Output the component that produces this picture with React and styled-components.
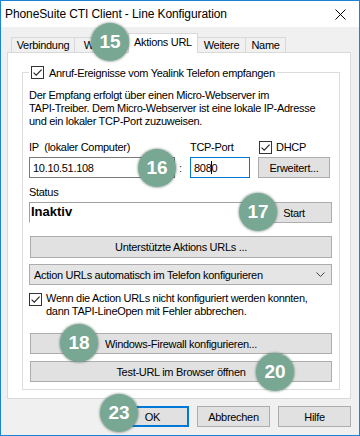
import React from 'react';
import styled, { createGlobalStyle, css } from 'styled-components';

const Global = createGlobalStyle`
  html, body { margin: 0; padding: 0; background: #fff; }
  body {
    font-family: "Liberation Sans", Arial, sans-serif;
    font-size: 11px;
    letter-spacing: -0.3px;
    color: #000;
  }
  * { box-sizing: border-box; }
`;

const Window = styled.div`
  position: relative;
  width: 360px;
  height: 436px;
  border: 1px solid #1883d7;
  background: #f0f0f0;
  display: flex;
  flex-direction: column;
  overflow: hidden;
`;

const TitleBar = styled.div`
  height: 26px;
  flex: 0 0 auto;
  background: #fff;
  display: flex;
  align-items: center;
  justify-content: space-between;
  padding-left: 4px;
`;

const Title = styled.span`
  font-size: 12px;
  letter-spacing: -0.1px;
  color: #000;
`;

const CloseButton = styled.div`
  width: 46px;
  height: 100%;
  display: flex;
  align-items: center;
  justify-content: center;
  margin-right: -4px;
  padding-top: 1px;
`;

const Body = styled.div`
  flex: 1 1 auto;
  display: flex;
  flex-direction: column;
  padding: 6px 8px 0 6px;
`;

const TabStrip = styled.div`
  display: flex;
  align-items: flex-end;
  height: 19px;
  padding-left: 4px;
  position: relative;
  z-index: 2;
`;

const Tab = styled.div`
  width: ${p => p.$w}px;
  height: 15px;
  margin-left: -1px;
  border: 1px solid #d9d9d9;
  border-bottom: none;
  background: #f0f0f0;
  display: flex;
  align-items: center;
  justify-content: center;
  white-space: nowrap;
  overflow: hidden;
  &:first-child { margin-left: 0; }
  ${p => p.$active && css`
    height: 20px;
    margin-bottom: -1px;
    background: #fff;
    padding-bottom: 3px;
    position: relative;
    z-index: 3;
  `}
`;

const Panel = styled.div`
  height: 347px;
  border: 1px solid #d9d9d9;
  background: #fff;
  padding: 0 10px 8px 14px;
  display: flex;
  flex-direction: column;
`;

const Group = styled.fieldset`
  margin: 13px 0 0 0;
  flex: 1 1 auto;
  border: 1px solid #dcdcdc;
  padding: 0 7px 0 6px;
  min-width: 0;
  display: flex;
  flex-direction: column;
`;

const Legend = styled.legend`
  padding: 0 2px;
  margin-left: 0;
  display: flex;
  align-items: center;
  gap: 5px;
  height: 13px;
  white-space: nowrap;
`;

const Box = styled.span`
  width: 13px;
  height: 13px;
  flex: 0 0 13px;
  border: 1px solid #333;
  background: #fff;
  display: inline-flex;
  align-items: center;
  justify-content: center;
`;

function CheckBox() {
  return (
    <Box>
      <svg width="11" height="11" viewBox="0 0 11 11">
        <path d="M1.6 5.6 L4.2 8.2 L9.6 2.6" fill="none" stroke="#222" strokeWidth="1.1" />
      </svg>
    </Box>
  );
}

const Description = styled.p`
  margin: 10px 0 0 0;
  line-height: 13px;
  white-space: nowrap;
`;

const AddressGrid = styled.div`
  display: grid;
  grid-template-columns: 146px 15px 60px 1fr;
  grid-template-rows: 13px 21px;
  row-gap: 3px;
  margin-top: 13px;
  align-items: center;
`;

const FieldLabel = styled.span`
  white-space: nowrap;
  line-height: 13px;
`;

const CheckLine = styled.label`
  display: flex;
  align-items: center;
  gap: 4px;
  padding-left: 9px;
  line-height: 13px;
`;

const TextBox = styled.div`
  height: 21px;
  border: 1px solid ${p => (p.$focused ? '#0078d7' : '#7a7a7a')};
  background: #fff;
  display: flex;
  align-items: center;
  padding-left: 3px;
  white-space: nowrap;
`;

const Caret = styled.span`
  display: inline-block;
  width: 0;
  height: 13px;
  border-left: 1px solid #000;
  margin-right: -1px;
`;

const Colon = styled.span`
  padding-left: 4px;
  color: #333;
`;

const Button = styled.div`
  height: ${p => p.$h || 21}px;
  border: 1px solid ${p => (p.$default ? '#0078d7' : '#adadad')};
  ${p => p.$default && css`box-shadow: inset 0 0 0 1px #0078d7;`}
  background: #e1e1e1;
  display: flex;
  align-items: center;
  justify-content: center;
  white-space: nowrap;
`;

const AdvancedCell = styled.div`
  padding-left: 8px;
  padding-right: 2px;
`;

const StatusLabel = styled.div`
  margin-top: 8px;
  line-height: 13px;
`;

const StatusRow = styled.div`
  display: grid;
  grid-template-columns: 221px 1fr;
  column-gap: 6px;
  margin-top: 3px;
`;

const StatusField = styled.div`
  height: 21px;
  border-top: 1px solid #a0a0a0;
  border-left: 1px solid #a0a0a0;
  border-bottom: 1px solid #fff;
  border-right: 1px solid #fff;
  font-weight: bold;
  font-size: 13px;
  letter-spacing: 0;
  padding: 1px 0 0 1px;
  line-height: 15px;
`;

const WideButton = styled(Button)`
  margin-top: ${p => p.$gap}px;
  margin-left: 1px;
`;

const Combo = styled.div`
  margin-top: 6px;
  height: 21px;
  border: 1px solid #acacac;
  background: #e5e5e5;
  display: flex;
  align-items: center;
  justify-content: space-between;
  padding: 0 6px 0 4px;
  white-space: nowrap;
`;

const CheckRow = styled.div`
  margin-top: 7px;
  display: flex;
  align-items: flex-start;
  gap: 4px;
  line-height: 13px;
  white-space: nowrap;
  & > span:first-child { margin-top: 1px; }
`;

const Footer = styled.div`
  display: flex;
  justify-content: flex-end;
  gap: 8px;
  margin-top: 7px;
`;

const FooterButton = styled(Button)`
  width: 73px;
`;

const Badge = styled.div`
  position: absolute;
  left: ${p => p.$x - 19}px;
  top: ${p => p.$y - 19}px;
  width: 38px;
  height: 38px;
  border-radius: 50%;
  background: #78a793;
  color: #fff;
  font: bold 19px "Liberation Sans", Arial, sans-serif;
  letter-spacing: 0;
  display: flex;
  align-items: center;
  justify-content: center;
  box-shadow: 0 0 2px 1px rgba(40, 70, 60, 0.35);
  z-index: 10;
`;

export default function App() {
  return (
    <>
      <Global />
      <Window>
        <TitleBar>
          <Title>PhoneSuite CTI Client - Line Konfiguration</Title>
          <CloseButton>
            <svg width="11" height="11" viewBox="0 0 11 11">
              <path d="M0.5 0.5L10.5 10.5M10.5 0.5L0.5 10.5" stroke="#000" strokeWidth="1" />
            </svg>
          </CloseButton>
        </TitleBar>
        <Body>
          <TabStrip>
            <Tab $w={64}>Verbindung</Tab>
            <Tab $w={55}>Wählen</Tab>
            <Tab $w={70} $active>Aktions URL</Tab>
            <Tab $w={49}>Weitere</Tab>
            <Tab $w={41}>Name</Tab>
          </TabStrip>
          <Panel>
            <Group>
              <Legend>
                <CheckBox />
                <span>Anruf-Ereignisse vom Yealink Telefon empfangen</span>
              </Legend>
              <Description>
                Der Empfang erfolgt über einen Micro-Webserver im
                <br />
                TAPI-Treiber. Dem Micro-Webserver ist eine lokale IP-Adresse
                <br />
                und ein lokaler TCP-Port zuzuweisen.
              </Description>
              <AddressGrid>
                <FieldLabel>IP&nbsp; (lokaler Computer)</FieldLabel>
                <span />
                <FieldLabel>TCP-Port</FieldLabel>
                <CheckLine>
                  <CheckBox />
                  <span>DHCP</span>
                </CheckLine>
                <TextBox>10.10.51.108</TextBox>
                <Colon>:</Colon>
                <TextBox $focused>
                  808
                  <Caret />0
                </TextBox>
                <AdvancedCell>
                  <Button>Erweitert...</Button>
                </AdvancedCell>
              </AddressGrid>
              <StatusLabel>Status</StatusLabel>
              <StatusRow>
                <StatusField>Inaktiv</StatusField>
                <Button>Start</Button>
              </StatusRow>
              <WideButton $gap={13} $h={22}>Unterstützte Aktions URLs ...</WideButton>
              <Combo>
                <span>Action URLs automatisch im Telefon konfigurieren</span>
                <svg width="9" height="5" viewBox="0 0 9 5">
                  <path d="M0.5 0.5 L4.5 4.5 L8.5 0.5" fill="none" stroke="#444" strokeWidth="1" />
                </svg>
              </Combo>
              <CheckRow>
                <CheckBox />
                <span>
                  Wenn die Action URLs nicht konfiguriert werden konnten,
                  <br />
                  dann TAPI-LineOpen mit Fehler abbrechen.
                </span>
              </CheckRow>
              <WideButton $gap={15}>Windows-Firewall konfigurieren...</WideButton>
              <WideButton $gap={7}>Test-URL im Browser öffnen</WideButton>
            </Group>
          </Panel>
          <Footer>
            <FooterButton $default>OK</FooterButton>
            <FooterButton>Abbrechen</FooterButton>
            <FooterButton>Hilfe</FooterButton>
          </Footer>
        </Body>
        <Badge $x={109} $y={41}>15</Badge>
        <Badge $x={156} $y={167}>16</Badge>
        <Badge $x={257} $y={211}>17</Badge>
        <Badge $x={78} $y={342}>18</Badge>
        <Badge $x={274} $y={371}>20</Badge>
        <Badge $x={118} $y={412}>23</Badge>
      </Window>
    </>
  );
}
